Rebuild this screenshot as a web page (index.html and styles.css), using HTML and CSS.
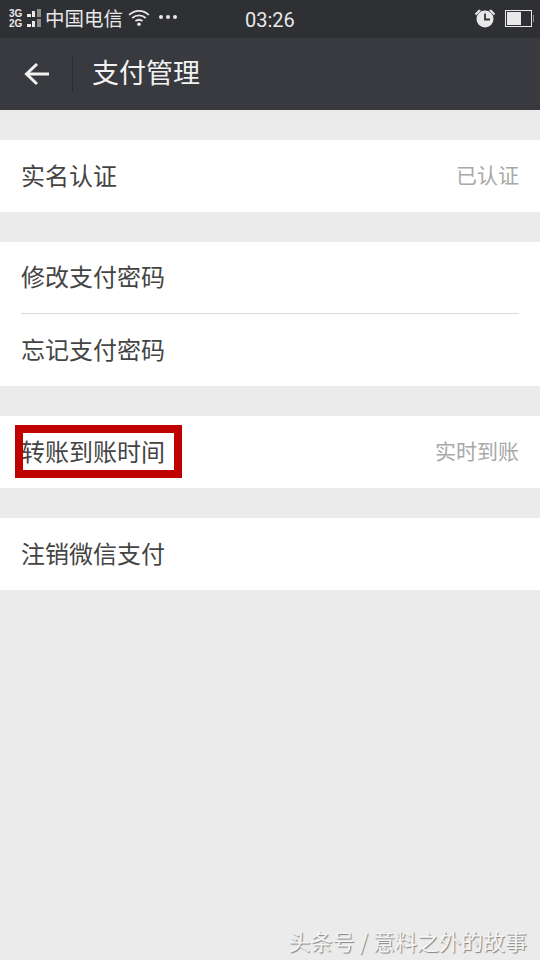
FILE: index.html
```html
<!DOCTYPE html>
<html lang="zh-CN">
<head>
  <meta charset="UTF-8">
  <title>支付管理</title>
  <link rel="stylesheet" href="styles.css">
</head>
<body>
  <div class="status-bar">
    <div class="status-left">
      <svg class="signal" width="33" height="20" viewBox="0 0 33 20">
        <text x="0" y="9" class="net">3G</text>
        <text x="0" y="19" class="net">2G</text>
        <g fill="#e8e8e8">
          <rect x="18" y="6" width="4" height="3"/>
          <rect x="23" y="3" width="3" height="6"/>
          <rect x="18" y="16" width="4" height="3"/>
          <rect x="23" y="13" width="3" height="6"/>
        </g>
        <g fill="#8a8b8d">
          <rect x="28" y="1" width="4" height="8"/>
          <rect x="28" y="11" width="4" height="8"/>
        </g>
      </svg>
      <span class="carrier">中国电信</span>
      <svg class="wifi" width="22" height="18" viewBox="0 0 24 20" fill="none" stroke="#e8e8e8" stroke-width="2">
        <path d="M1 6.5C7.500 .5 16.500 .5 23 6.500"/>
        <path d="M4.500 10C9 6 15 6 19.500 10"/>
        <path d="M8 13.500C10.500 11.500 13.500 11.500 16 13.500"/>
        <circle cx="12" cy="17" r="2" fill="#e8e8e8" stroke="none"/>
      </svg>
      <span class="dots"><i></i><i></i><i></i></span>
    </div>
    <span class="clock">03:26</span>
    <div class="status-right">
      <svg width="22" height="20" viewBox="0 0 22 20">
        <circle cx="11" cy="11" r="8.500" fill="#e8e8e8"/>
        <path d="M1 5.500L5 1.500L7 2.500L2 7.500ZM21 5.500L17 1.500L15 2.500L20 7.500Z" fill="#e8e8e8"/>
        <path d="M11 5.500V11.500H16" fill="none" stroke="#333438" stroke-width="1.800"/>
      </svg>
      <div class="battery"><div class="battery-level"></div></div>
      <div class="battery-tip"></div>
    </div>
  </div>

  <header class="nav-bar">
    <svg class="back" width="26" height="24" viewBox="0 0 26 24" fill="none" stroke="#f2f2f2" stroke-width="3">
      <path d="M25 12H3"/>
      <path d="M13 2L2.500 12L13 22"/>
    </svg>
    <div class="nav-line"></div>
    <h1>支付管理</h1>
  </header>

  <div class="group">
    <div class="row"><span>实名认证</span><span class="value">已认证</span></div>
  </div>

  <div class="group">
    <div class="row row-line"><span>修改支付密码</span></div>
    <div class="row"><span>忘记支付密码</span></div>
  </div>

  <div class="group">
    <div class="row">
      <span>转账到账时间</span><span class="value">实时到账</span>
      <div class="red-box"></div>
    </div>
  </div>

  <div class="group">
    <div class="row"><span>注销微信支付</span></div>
  </div>

  <div class="watermark">头条号 / 意料之外的故事</div>
</body>
</html>
```

FILE: styles.css
```css
body {
  margin: 0;
  height: 960px;
  overflow: hidden;
  position: relative;
  background: #ebebeb;
  color: #444;
  font-family: "Noto Sans CJK SC", "Noto Sans", sans-serif;
}
.status-bar {
  height: 38px;
  background: #2f3034;
  color: #e8e8e8;
  display: flex;
  align-items: center;
  justify-content: space-between;
  padding: 0 6px 2px 9px;
  box-sizing: border-box;
  position: relative;
}
.status-left {
  display: flex;
  align-items: center;
}
.signal {
  margin-right: 3px;
}
.net {
  font-family: "Liberation Sans", sans-serif;
  font-size: 10px;
  font-weight: bold;
  fill: #e8e8e8;
}
.carrier {
  font-size: 19.500px;
  line-height: 36px;
}
.wifi {
  margin-left: 5px;
}
.dots {
  display: flex;
  gap: 3px;
  margin-left: 9px;
  margin-bottom: 3px;
}
.dots i {
  width: 4px;
  height: 4px;
  border-radius: 50%;
  background: #e8e8e8;
}
.clock {
  position: absolute;
  left: 245px;
  top: 8px;
  font-family: Roboto, sans-serif;
  font-size: 20px;
  line-height: 24px;
}
.status-right {
  display: flex;
  align-items: center;
}
.battery {
  width: 23px;
  height: 13px;
  margin-left: 9px;
  padding: 1px;
  border: 1px solid #e8e8e8;
}
.battery-level {
  width: 14px;
  height: 13px;
  background: #e8e8e8;
}
.battery-tip {
  width: 1px;
  height: 7px;
  background: #8a8a8a;
  margin-left: 1px;
}
.nav-bar {
  height: 72px;
  background: #393a3f;
  display: flex;
  align-items: center;
  padding-left: 24px;
}
.nav-line {
  width: 1px;
  height: 36px;
  background: #2b2c30;
  margin: 0 19px 0 22px;
}
.nav-bar h1 {
  margin: 0 0 5px;
  color: #f2f2f2;
  font-size: 27px;
  font-weight: 400;
}
.group {
  background: #fff;
  margin-top: 30px;
  padding: 0 21px;
}
.row {
  height: 72px;
  padding-bottom: 4px;
  box-sizing: border-box;
  display: flex;
  align-items: center;
  justify-content: space-between;
  font-size: 24px;
  position: relative;
}
.row-line {
  border-bottom: 1px solid #dcdcdc;
}
.value {
  color: #a8a8a8;
  font-size: 21px;
}
.red-box {
  position: absolute;
  left: -6px;
  top: 9px;
  width: 151px;
  height: 37px;
  border: 8px solid #be0000;
}
.watermark {
  position: absolute;
  right: 13px;
  bottom: 6px;
  color: #f4f4f4;
  font-size: 22px;
  line-height: 28px;
  text-shadow: 1px 1px 1px #808080;
}
```
